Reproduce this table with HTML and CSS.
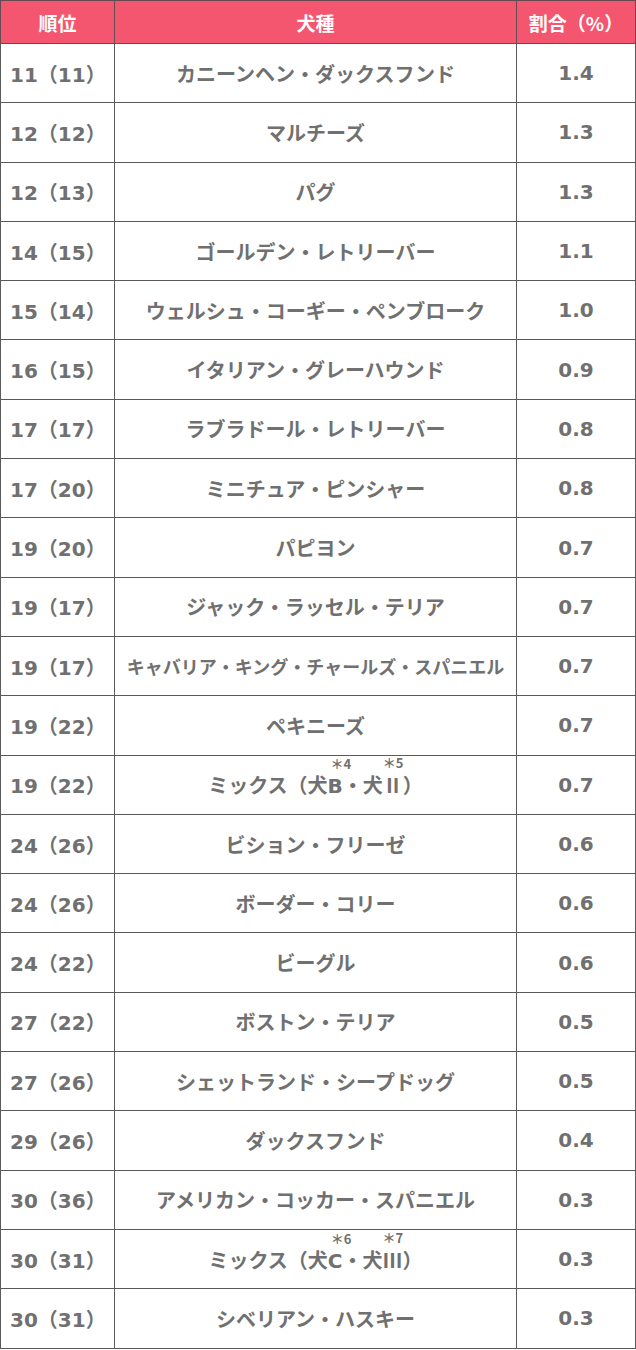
FILE: index.html
```html
<!DOCTYPE html>
<html lang="ja">
<head>
<meta charset="utf-8">
<link rel="stylesheet" href="styles.css">
</head>
<body>
<table class="rank">
  <thead>
    <tr><th>順位</th><th>犬種</th><th>割合（%）</th></tr>
  </thead>
  <tbody>
    <tr><td class="pos">11（11）</td><td class="name">カニーンヘン・ダックスフンド</td><td class="pct">1.4</td></tr>
    <tr><td class="pos">12（12）</td><td class="name">マルチーズ</td><td class="pct">1.3</td></tr>
    <tr><td class="pos">12（13）</td><td class="name">パグ</td><td class="pct">1.3</td></tr>
    <tr><td class="pos">14（15）</td><td class="name">ゴールデン・レトリーバー</td><td class="pct">1.1</td></tr>
    <tr><td class="pos">15（14）</td><td class="name">ウェルシュ・コーギー・ペンブローク</td><td class="pct">1.0</td></tr>
    <tr><td class="pos">16（15）</td><td class="name">イタリアン・グレーハウンド</td><td class="pct">0.9</td></tr>
    <tr><td class="pos">17（17）</td><td class="name">ラブラドール・レトリーバー</td><td class="pct">0.8</td></tr>
    <tr><td class="pos">17（20）</td><td class="name">ミニチュア・ピンシャー</td><td class="pct">0.8</td></tr>
    <tr><td class="pos">19（20）</td><td class="name">パピヨン</td><td class="pct">0.7</td></tr>
    <tr><td class="pos">19（17）</td><td class="name">ジャック・ラッセル・テリア</td><td class="pct">0.7</td></tr>
    <tr><td class="pos">19（17）</td><td class="name long">キャバリア・キング・チャールズ・スパニエル</td><td class="pct">0.7</td></tr>
    <tr><td class="pos">19（22）</td><td class="name">ペキニーズ</td><td class="pct">0.7</td></tr>
    <tr><td class="pos">19（22）</td><td class="name">ミックス（犬<span class="anc">B<span class="sup sup-l">＊4</span></span>・犬<span class="anc roman">Ⅱ<span class="sup sup-r">＊5</span></span>）</td><td class="pct">0.7</td></tr>
    <tr><td class="pos">24（26）</td><td class="name">ビション・フリーゼ</td><td class="pct">0.6</td></tr>
    <tr><td class="pos">24（26）</td><td class="name">ボーダー・コリー</td><td class="pct">0.6</td></tr>
    <tr><td class="pos">24（22）</td><td class="name">ビーグル</td><td class="pct">0.6</td></tr>
    <tr><td class="pos">27（22）</td><td class="name">ボストン・テリア</td><td class="pct">0.5</td></tr>
    <tr><td class="pos">27（26）</td><td class="name">シェットランド・シープドッグ</td><td class="pct">0.5</td></tr>
    <tr><td class="pos">29（26）</td><td class="name">ダックスフンド</td><td class="pct">0.4</td></tr>
    <tr><td class="pos">30（36）</td><td class="name">アメリカン・コッカー・スパニエル</td><td class="pct">0.3</td></tr>
    <tr><td class="pos">30（31）</td><td class="name">ミックス（犬<span class="anc">C<span class="sup sup-l">＊6</span></span>・犬<span class="anc roman">Ⅲ<span class="sup sup-r">＊7</span></span>）</td><td class="pct">0.3</td></tr>
    <tr><td class="pos">30（31）</td><td class="name">シベリアン・ハスキー</td><td class="pct">0.3</td></tr>
  </tbody>
</table>
</body>
</html>
```

FILE: styles.css
```css
html, body {
  margin: 0;
  padding: 0;
  background: #ffffff;
}

.rank {
  width: 636px;
  border-collapse: collapse;
  table-layout: fixed;
  font-family: "DejaVu Sans", "Noto Sans CJK JP", sans-serif;
  font-weight: bold;
  font-size: 20px;
  color: #707070;
}

.rank th,
.rank td {
  border: 1.5px solid #5a5a5a;
  padding: 0;
  white-space: nowrap;
}

.rank th:nth-child(1),
.rank td:nth-child(1) { width: 113px; }
.rank th:nth-child(2),
.rank td:nth-child(2) { width: 401px; }

.rank thead tr { height: 43px; }
.rank tbody tr { height: 59.3px; }

.rank th {
  background: #f5566f;
  color: #ffffff;
  font-family: "Noto Sans CJK JP", sans-serif;
  font-size: 19px;
  text-align: center;
  border-color: #6a4a52;
}

.pos {
  text-align: left;
  padding-left: 9px !important;
}

.name {
  text-align: center;
  font-family: "Noto Sans CJK JP", sans-serif;
  font-size: 20px;
}

.name.long {
  font-size: 18px;
}

.pct {
  text-align: center;
}

.anc {
  position: relative;
  font-family: "DejaVu Sans", "Noto Sans CJK JP", sans-serif;
}

.anc.roman {
  font-family: "Noto Sans CJK JP", sans-serif;
}

.sup {
  position: absolute;
  top: -17px;
  font-size: 13px;
  line-height: 1;
  font-family: "Noto Sans CJK JP", sans-serif;
  white-space: nowrap;
}

.anc.roman .sup { top: -14px; }

.sup-l { left: 3px; }
.sup-r { left: 0; }
```
